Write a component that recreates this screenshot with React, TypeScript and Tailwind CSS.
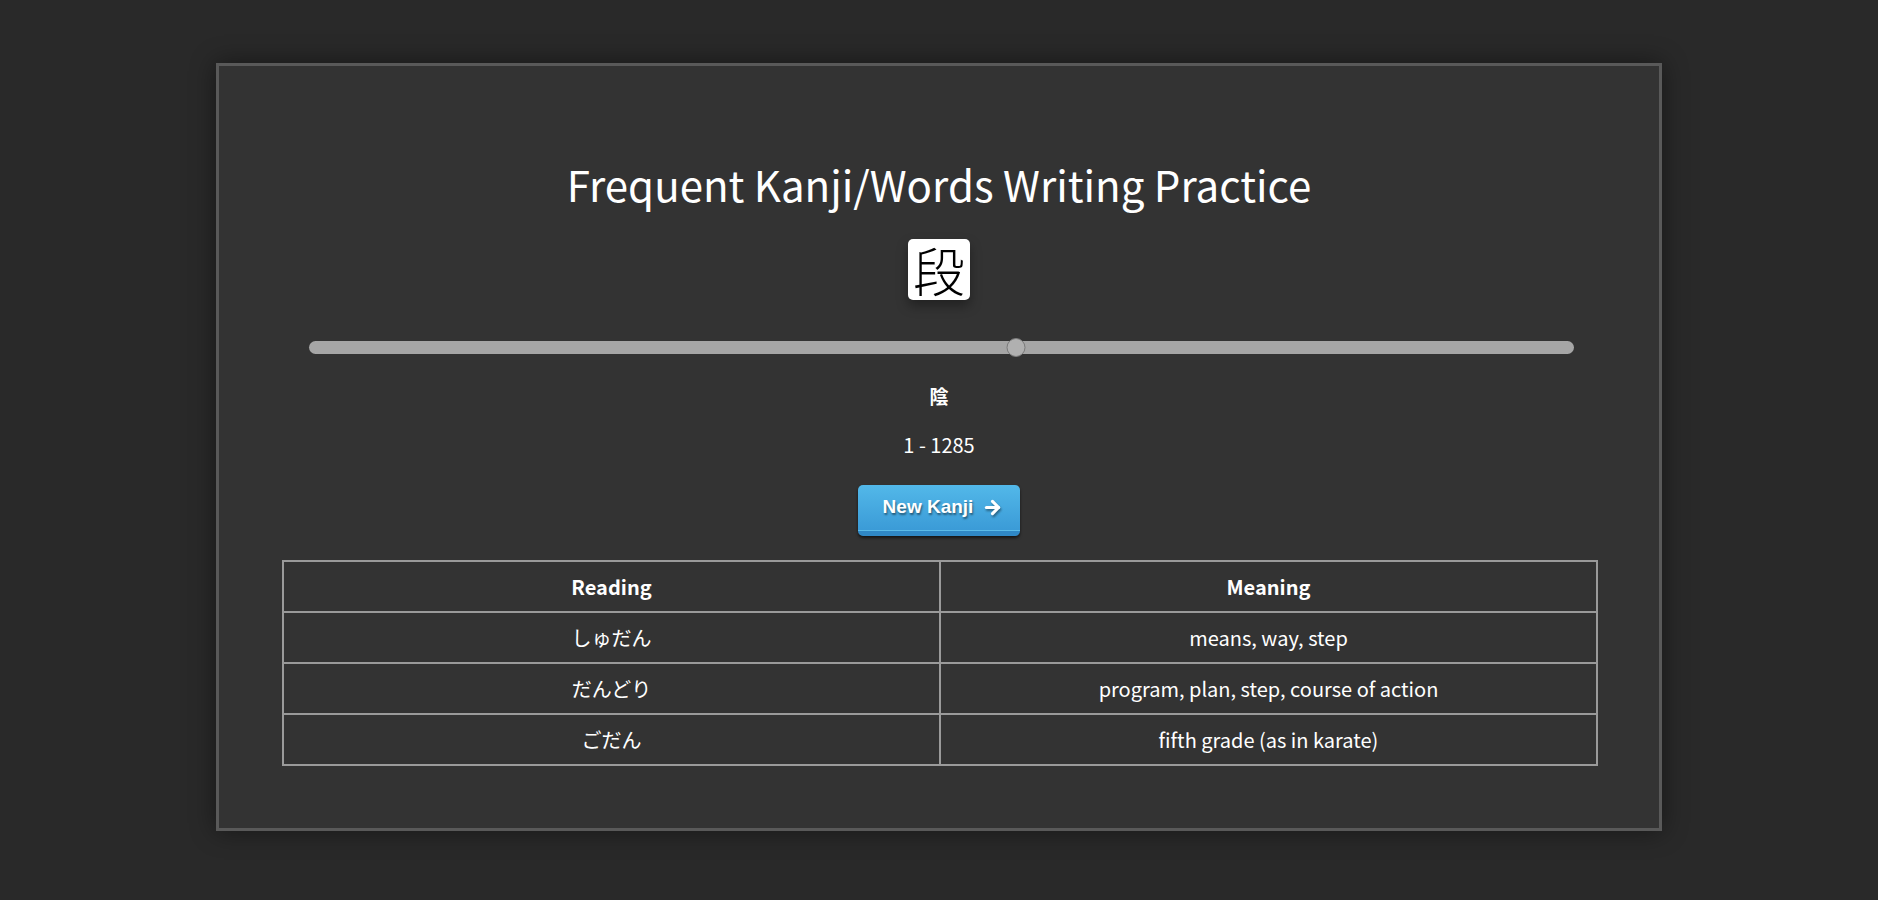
import React from "react";
import { ArrowRight } from "lucide-react";

const rows = [
  { reading: "しゅだん", meaning: "means, way, step" },
  { reading: "だんどり", meaning: "program, plan, step, course of action" },
  { reading: "ごだん", meaning: "fifth grade (as in karate)" },
];

const font = { fontFamily: '"Noto Sans CJK JP", "Noto Sans", sans-serif' };

export default function App() {
  return (
    <div className="min-h-screen bg-[#292929] pt-[63px]" style={font}>
      <div className="mx-auto flex h-[768px] w-[1446px] flex-col items-center border-[3px] border-[#595959] bg-[#333333] shadow-[0_0_24px_rgba(0,0,0,0.45)]">
        <h1 className="mt-[93px] text-[42px] leading-[50px] font-normal text-white">
          Frequent Kanji/Words Writing Practice
        </h1>

        <div className="mt-[30px] flex h-[61px] w-[62px] items-center justify-center rounded-[5px] bg-white text-[52px] leading-none font-light text-black shadow-[0_6px_12px_rgba(0,0,0,0.35)]">
          段
        </div>

        <div className="relative mt-[41px] ml-[5px] h-[13px] w-[1265px] rounded-full bg-[#a6a6a6]">
          <div className="absolute top-[-3px] left-[55.9%] h-[19px] w-[19px] -translate-x-1/2 rounded-full border border-[#7a7a7a] bg-[#b0b0b0]" />
        </div>

        <div className="mt-[30px] text-[19px] leading-[24px] font-bold text-white">陰</div>
        <div className="mt-[25px] text-[20px] leading-[24px] text-white">1 - 1285</div>

        <button className="mt-[28px] flex h-[51px] w-[162px] flex-col overflow-hidden rounded-[5px] shadow-[0_2px_3px_rgba(0,0,0,0.6)]">
          <span className="flex h-[45px] w-full items-center justify-center bg-gradient-to-b from-[#52b8e9] to-[#3b9bd7] pl-[8px] text-[19px] font-bold text-white [font-family:'Liberation_Sans',Arial,sans-serif] [text-shadow:1px_2px_2px_rgba(0,0,0,0.45)]">
            New Kanji
            <ArrowRight
              size={21}
              strokeWidth={3.5}
              className="ml-[9px] drop-shadow-[1px_2px_1px_rgba(0,0,0,0.4)]"
            />
          </span>
          <span className="h-[6px] w-full border-t border-[#5bbbe8] bg-[#2f88c6]" />
        </button>

        <table className="mt-[24px] ml-[2px] w-[1316px] table-fixed border-collapse text-[20px] text-white">
          <thead>
            <tr className="h-[51px]">
              <th className="border-2 border-[#9a9a9a] font-bold">Reading</th>
              <th className="border-2 border-[#9a9a9a] font-bold">Meaning</th>
            </tr>
          </thead>
          <tbody>
            {rows.map((r) => (
              <tr key={r.reading} className="h-[51px]">
                <td className="border-2 border-[#9a9a9a] text-center">{r.reading}</td>
                <td className="border-2 border-[#9a9a9a] text-center">{r.meaning}</td>
              </tr>
            ))}
          </tbody>
        </table>
      </div>
    </div>
  );
}
